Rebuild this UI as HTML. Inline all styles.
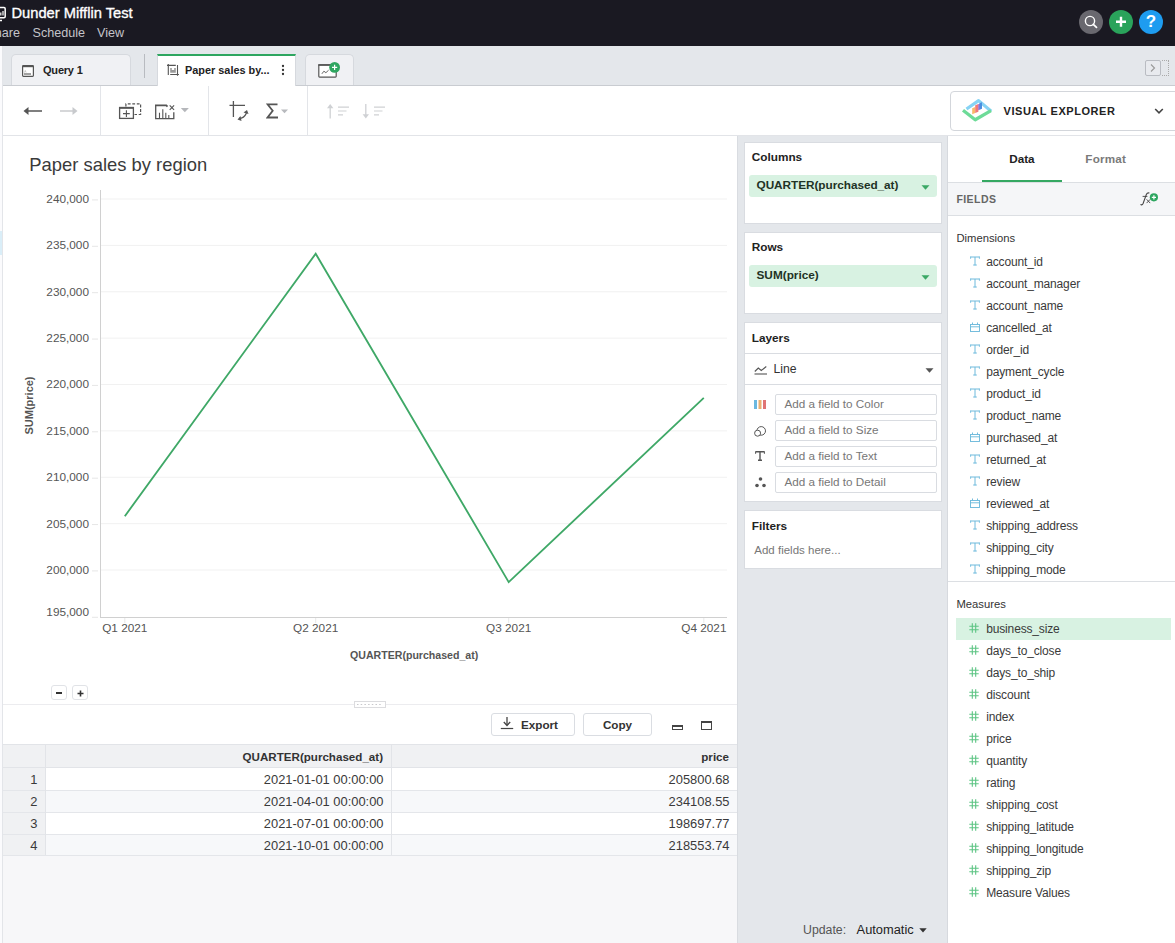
<!DOCTYPE html>
<html><head><meta charset="utf-8">
<style>
*{box-sizing:border-box;margin:0;padding:0}
html,body{width:1175px;height:943px;overflow:hidden;background:#fff;font-family:"Liberation Sans",sans-serif;color:#333}
.a{position:absolute}
.t{position:absolute;white-space:nowrap}
#top{left:0;top:0;width:1175px;height:46px;background:#1a1922}
#tabbar{left:0;top:46px;width:1175px;height:40px;background:#e4e7eb;border-bottom:1px solid #c9ccd1}
#toolbar{left:0;top:86px;width:1175px;height:50px;background:#fff;border-bottom:1px solid #e2e4e8}
.sep{position:absolute;width:1px;background:#e3e5e9}
</style></head>
<body>
<!-- left strip -->


<!-- TOP BAR -->
<div id="top" class="a">
  <svg class="a" style="left:0;top:6px" width="8" height="16" viewBox="0 0 8 16"><rect x="-4" y="1.5" width="9.2" height="10.2" rx="1.2" fill="none" stroke="#fff" stroke-width="1.5"/><path d="M0.8 6.5v3M3 5v4.5" stroke="#fff" stroke-width="1.2"/><path d="M-1 14.5h3" stroke="#fff" stroke-width="1.3"/></svg>
  <div class="t" style="left:11.5px;top:6.4px;font-size:14.7px;line-height:14.7px;color:#fff;-webkit-text-stroke:0.35px #fff">Dunder Mifflin Test</div>
  <div class="t" style="left:-13.6px;top:26.6px;font-size:12.6px;line-height:12.6px;color:#c4c4c9">Share</div>
  <div class="t" style="left:32.5px;top:26.6px;font-size:12.6px;line-height:12.6px;color:#c4c4c9">Schedule</div>
  <div class="t" style="left:97px;top:26.6px;font-size:12.6px;line-height:12.6px;color:#c4c4c9">View</div>
  <div class="a" style="left:1079px;top:10px;width:24px;height:24px;border-radius:50%;background:#69686f"></div>
  <svg class="a" style="left:1079px;top:10px" width="24" height="24" viewBox="0 0 24 24"><circle cx="11" cy="11" r="4.6" fill="none" stroke="#fff" stroke-width="1.4"/><path d="M14.3 14.3l3.2 3" stroke="#fff" stroke-width="1.8" stroke-linecap="round"/></svg>
  <div class="a" style="left:1109px;top:10px;width:24px;height:24px;border-radius:50%;background:#2aa35b"></div>
  <svg class="a" style="left:1109px;top:10px" width="24" height="24" viewBox="0 0 24 24"><path d="M12 6.8v10M7 11.8h10" stroke="#fff" stroke-width="2.4"/></svg>
  <div class="a" style="left:1139px;top:10px;width:24px;height:24px;border-radius:50%;background:#1e9cf0"></div>
  <div class="t" style="left:1139px;top:4px;width:24px;text-align:center;font-size:17px;line-height:24px;font-weight:bold;color:#fff;top:10px">?</div>
</div>

<!-- TAB BAR -->
<div id="tabbar" class="a"></div>
<div class="a" style="left:11px;top:54px;width:120px;height:31px;background:#f0f1f4;border:1px solid #d6d9de;border-bottom:none;border-radius:5px 5px 0 0"></div>
<svg class="a" style="left:22px;top:65px" width="12" height="12" viewBox="0 0 12 12"><rect x="0.6" y="0.6" width="10.8" height="10.8" rx="0.8" fill="#fff" stroke="#555" stroke-width="1.2"/><rect x="0.6" y="0.6" width="10.8" height="1.6" fill="#555"/><path d="M2 9h7" stroke="#444" stroke-width="1"/><path d="M2.5 7.5l0.8-2 0.8 2" stroke="#aaa" stroke-width="0.6" fill="none"/></svg>
<div class="t" style="left:43px;top:64.7px;font-size:11px;line-height:11px;font-weight:bold;color:#222;letter-spacing:-0.2px">Query 1</div>
<div class="a" style="left:143.5px;top:54px;width:1px;height:24px;background:#b8bbc0"></div>
<div class="a" style="left:157px;top:54px;width:139px;height:32px;background:#fff;border-top:2px solid #2ea660;border-left:1px solid #d6d9de;border-right:1px solid #d6d9de"></div>
<svg class="a" style="left:167px;top:63px" width="13" height="14" viewBox="0 0 13 14"><path d="M0 2.35H8.8M1.3 1V11.9M10.5 2V12.7M3.2 11.5H11.9" stroke="#555" stroke-width="1.1" fill="none"/><path d="M3.2 9.7V4.9h1.6v2h2.4v-2h1.6v4.8z" fill="#9a9a9a"/></svg>
<div class="t" style="left:185px;top:64.7px;font-size:10.9px;line-height:10.9px;font-weight:bold;color:#222">Paper sales by...</div>
<svg class="a" style="left:281px;top:63px" width="4" height="13" viewBox="0 0 4 13"><circle cx="2" cy="3" r="1.15" fill="#333"/><circle cx="2" cy="7" r="1.15" fill="#333"/><circle cx="2" cy="11" r="1.15" fill="#333"/></svg>
<div class="a" style="left:304.5px;top:54px;width:49px;height:31px;background:#f0f1f4;border:1px solid #d6d9de;border-bottom:none;border-radius:5px 5px 0 0"></div>
<svg class="a" style="left:317px;top:61px" width="24" height="18" viewBox="0 0 24 18"><rect x="1.8" y="3.8" width="17.4" height="12.3" rx="0.8" fill="#fff" stroke="#555" stroke-width="1.2"/><rect x="1.2" y="3.2" width="14" height="1.6" fill="#555"/><path d="M4.9 12.8L6.9 10.2 8.9 11.7 11.6 9.2" stroke="#555" stroke-width="0.9" fill="none"/><circle cx="17.6" cy="6.4" r="5.4" fill="#2ea660"/><path d="M17.6 3.8v5.2M15 6.4h5.2" stroke="#fff" stroke-width="1.2"/></svg>
<div class="a" style="left:1144.5px;top:60px;width:16px;height:16px;border:1px solid #b9bcc2;border-radius:2px;background:#e8eaee"></div>
<svg class="a" style="left:1145px;top:60px" width="16" height="16" viewBox="0 0 16 16"><path d="M6 4.5l3.5 3.5L6 11.5" stroke="#999" stroke-width="1.1" fill="none"/></svg>
<div class="a" style="left:1162px;top:60px;width:7px;height:16px;border:1px dotted #aaa;border-left:none"></div>

<!-- TOOLBAR -->
<div id="toolbar" class="a"></div>
<div class="sep" style="left:100px;top:86px;height:49px"></div>
<div class="sep" style="left:208px;top:86px;height:49px"></div>
<div class="sep" style="left:307px;top:86px;height:49px"></div>

<!-- toolbar icons -->
<svg class="a" style="left:23px;top:105px" width="20" height="12" viewBox="0 0 20 12"><path d="M2 6h17" stroke="#555" stroke-width="1.5"/><path d="M0.5 6L5.5 2v8z" fill="#555"/></svg>
<svg class="a" style="left:59px;top:105px" width="20" height="12" viewBox="0 0 20 12"><path d="M1 6h16" stroke="#c8cacd" stroke-width="1.5"/><path d="M18.5 6L13.5 2v8z" fill="#c8cacd"/></svg>
<svg class="a" style="left:118px;top:102px" width="25" height="18" viewBox="0 0 25 18"><path d="M7.9 4.5V1.9H22.6V12.5H16.5" stroke="#555" stroke-width="1.2" stroke-dasharray="2.8 1.7" fill="none"/><rect x="1.6" y="5.6" width="13.8" height="10.8" fill="#fff" stroke="#555" stroke-width="1.3"/><rect x="1" y="4.9" width="15" height="1.9" fill="#555"/><path d="M8.4 8.3v6.6M5 11.6h6.8" stroke="#555" stroke-width="1.1"/></svg>
<svg class="a" style="left:155px;top:103px" width="36" height="17" viewBox="0 0 36 17"><path d="M0.7 2.2V15.6H18.8V9.2" stroke="#555" stroke-width="1.3" fill="none"/><path d="M0 2.3H11.3L12.5 3.6" stroke="#555" stroke-width="1.7" fill="none"/><path d="M4.5 15V9.8M7.8 15V6.2M10.8 15V9.8M13.8 15V12" stroke="#555" stroke-width="1.1"/><path d="M14.7 2.4l4.4 4.4M19.1 2.4l-4.4 4.4" stroke="#555" stroke-width="1.1"/><path d="M25.8 5h8.1l-4.05 4.2z" fill="#b5b7bb"/></svg>
<svg class="a" style="left:229px;top:101px" width="22" height="21" viewBox="0 0 22 21"><path d="M0.5 4.3h15.5M4.4 0v16" stroke="#555" stroke-width="1.3"/><path d="M10 17.5q5 0 7.5-5.5" stroke="#555" stroke-width="1.3" fill="none"/><path d="M14.5 11.5l3.5-2.5 1.5 4z" fill="#555"/><path d="M11.5 15l-3 3.5 4 1.5z" fill="#555"/></svg>
<svg class="a" style="left:266px;top:103px" width="24" height="16" viewBox="0 0 24 16"><path d="M11.5 1.3H1.5l5.2 6.5L1.5 14.5h10.5" stroke="#555" stroke-width="1.8" fill="none"/><path d="M15 6.5h7l-3.5 3.7z" fill="#b8babe"/></svg>
<svg class="a" style="left:326px;top:103px" width="24" height="17" viewBox="0 0 24 17"><path d="M4.2 3v12.5" stroke="#cfd1d4" stroke-width="1.3"/><path d="M4.2 1L1 5.3h6.4z" fill="#cfd1d4"/><path d="M12 4.2h11M12 8h8.5M12 11.9h5" stroke="#cfd1d4" stroke-width="1.2"/></svg>
<svg class="a" style="left:362px;top:103px" width="24" height="17" viewBox="0 0 24 17"><path d="M3.8 1v12.5" stroke="#cfd1d4" stroke-width="1.3"/><path d="M3.8 15.5L0.6 11.2h6.4z" fill="#cfd1d4"/><path d="M12 4.2h11M12 8h8.5M12 11.9h5" stroke="#cfd1d4" stroke-width="1.2"/></svg>
<!-- visual explorer -->
<div class="a" style="left:949.8px;top:91px;width:240px;height:40px;border:1px solid #d3d6db;border-radius:4px;background:#fff"></div>
<svg class="a" style="left:955px;top:92px" width="45" height="38" viewBox="0 0 45 38"><path d="M11.5 17L23.6 8.6L36.2 19.2" stroke="#86d3f4" stroke-width="3.2" fill="none" stroke-linejoin="round"/><path d="M17.2 16.2l3-1.2v6l-3 1.2z" fill="#f8b86a"/><path d="M20.2 13.2l3.2-1.3v7.8l-3.2 1.3z" fill="#f07a78"/><path d="M23.2 12.2l1.8-0.7v6l-1.8 0.7z" fill="#9d6fd0"/><path d="M24.6 11.3l2.4-1v6.4l-2.4 1z" fill="#4a8fe0"/><path d="M8 18.3L20.2 27.8L36 18.6" stroke="#6ddb98" stroke-width="3.3" fill="none" stroke-linejoin="round"/></svg>
<div class="t" style="left:1003.5px;top:105.8px;font-size:11px;line-height:11px;font-weight:bold;color:#222;letter-spacing:0.55px">VISUAL EXPLORER</div>
<svg class="a" style="left:1154px;top:107px" width="10" height="8" viewBox="0 0 10 8"><path d="M1.2 2l3.8 3.8L8.8 2" stroke="#444" stroke-width="1.6" fill="none"/></svg>
<!--MAIN-->
<div class="a" style="left:3px;top:136px;width:735px;height:807px;background:#fff;border-right:1px solid #d9dce1"></div>
<div class="t" style="left:29.3px;top:156.2px;font-size:18.4px;line-height:18.4px;color:#3a3a3a">Paper sales by region</div>
<svg class="a" style="left:0;top:0" width="740" height="720" viewBox="0 0 740 720"><path d="M101 199.02H727" stroke="#f1f1f1" stroke-width="1"/><path d="M92 199.92H98" stroke="#e6e6e6" stroke-width="1"/><path d="M101 245.40H727" stroke="#f1f1f1" stroke-width="1"/><path d="M92 246.30H98" stroke="#e6e6e6" stroke-width="1"/><path d="M101 291.77H727" stroke="#f1f1f1" stroke-width="1"/><path d="M92 292.67H98" stroke="#e6e6e6" stroke-width="1"/><path d="M101 338.15H727" stroke="#f1f1f1" stroke-width="1"/><path d="M92 339.05H98" stroke="#e6e6e6" stroke-width="1"/><path d="M101 384.52H727" stroke="#f1f1f1" stroke-width="1"/><path d="M92 385.42H98" stroke="#e6e6e6" stroke-width="1"/><path d="M101 430.90H727" stroke="#f1f1f1" stroke-width="1"/><path d="M92 431.80H98" stroke="#e6e6e6" stroke-width="1"/><path d="M101 477.27H727" stroke="#f1f1f1" stroke-width="1"/><path d="M92 478.17H98" stroke="#e6e6e6" stroke-width="1"/><path d="M101 523.65H727" stroke="#f1f1f1" stroke-width="1"/><path d="M92 524.55H98" stroke="#e6e6e6" stroke-width="1"/><path d="M101 570.02H727" stroke="#f1f1f1" stroke-width="1"/><path d="M92 570.92H98" stroke="#e6e6e6" stroke-width="1"/><path d="M92 617.30H98" stroke="#e6e6e6" stroke-width="1"/><path d="M100.5 190V617" stroke="#d0d0d0" stroke-width="1"/><path d="M100 617.5H727" stroke="#d0d0d0" stroke-width="1"/><path d="M124.8 618V623" stroke="#e8e8e8" stroke-width="1"/><path d="M315.7 618V623" stroke="#e8e8e8" stroke-width="1"/><path d="M508.7 618V623" stroke="#e8e8e8" stroke-width="1"/><path d="M703.8 618V623" stroke="#e8e8e8" stroke-width="1"/><polyline points="124.8,516.2 315.7,253.7 508.7,582.1 703.8,397.9" fill="none" stroke="#3fa867" stroke-width="1.85" stroke-linejoin="miter"/></svg>
<div class="t" style="left:0;width:89px;text-align:right;top:193.8px;font-size:11.8px;line-height:11.8px;color:#555">240,000</div>
<div class="t" style="left:0;width:89px;text-align:right;top:240.2px;font-size:11.8px;line-height:11.8px;color:#555">235,000</div>
<div class="t" style="left:0;width:89px;text-align:right;top:286.6px;font-size:11.8px;line-height:11.8px;color:#555">230,000</div>
<div class="t" style="left:0;width:89px;text-align:right;top:333.0px;font-size:11.8px;line-height:11.8px;color:#555">225,000</div>
<div class="t" style="left:0;width:89px;text-align:right;top:379.3px;font-size:11.8px;line-height:11.8px;color:#555">220,000</div>
<div class="t" style="left:0;width:89px;text-align:right;top:425.7px;font-size:11.8px;line-height:11.8px;color:#555">215,000</div>
<div class="t" style="left:0;width:89px;text-align:right;top:472.1px;font-size:11.8px;line-height:11.8px;color:#555">210,000</div>
<div class="t" style="left:0;width:89px;text-align:right;top:518.5px;font-size:11.8px;line-height:11.8px;color:#555">205,000</div>
<div class="t" style="left:0;width:89px;text-align:right;top:564.8px;font-size:11.8px;line-height:11.8px;color:#555">200,000</div>
<div class="t" style="left:0;width:89px;text-align:right;top:607.2px;font-size:11.8px;line-height:11.8px;color:#555">195,000</div>
<div class="t" style="left:74.8px;width:100px;text-align:center;top:622.9px;font-size:11.8px;line-height:11.8px;color:#555">Q1 2021</div>
<div class="t" style="left:265.7px;width:100px;text-align:center;top:622.9px;font-size:11.8px;line-height:11.8px;color:#555">Q2 2021</div>
<div class="t" style="left:458.7px;width:100px;text-align:center;top:622.9px;font-size:11.8px;line-height:11.8px;color:#555">Q3 2021</div>
<div class="t" style="left:627px;width:99.5px;text-align:right;top:622.9px;font-size:11.8px;line-height:11.8px;color:#555">Q4 2021</div>
<div class="t" style="left:350px;top:650px;font-size:10.6px;line-height:10.6px;font-weight:bold;color:#555">QUARTER(purchased_at)</div>
<div class="t" style="left:-6px;top:399.5px;width:70px;text-align:center;transform:rotate(-90deg);font-size:11px;line-height:11px;font-weight:bold;color:#555">SUM(price)</div>
<div class="a" style="left:51px;top:684.8px;width:15.5px;height:15.7px;border:1px solid #e1e3e7;border-radius:3px;background:#fff"></div>
<div class="a" style="left:55.8px;top:692px;width:6px;height:2px;background:#333"></div>
<div class="a" style="left:72px;top:684.8px;width:15.5px;height:15.7px;border:1px solid #e1e3e7;border-radius:3px;background:#fff"></div>
<svg class="a" style="left:76.6px;top:689.6px" width="7" height="7" viewBox="0 0 7 7"><path d="M3.5 0.5v6M0.5 3.5h6" stroke="#333" stroke-width="1.6"/></svg>
<div class="a" style="left:3px;top:704px;width:734px;height:1px;background:#ececef"></div>
<div class="a" style="left:353.8px;top:701px;width:32px;height:6.5px;border:1px solid #dcdcdf;background:#fff"></div>
<svg class="a" style="left:354.3px;top:701.5px" width="31" height="5" viewBox="0 0 31 5"><path d="M3 2.5h25" stroke="#c8c8cc" stroke-width="1.2" stroke-dasharray="1.5 2.2"/></svg>
<div class="a" style="left:491px;top:712.5px;width:83.5px;height:23px;border:1px solid #dadde2;border-radius:3px;background:#fff"></div>
<svg class="a" style="left:500px;top:716px" width="14" height="14" viewBox="0 0 14 14"><path d="M7 1v8" stroke="#444" stroke-width="1.3"/><path d="M3.8 6L7 9.5 10.2 6" stroke="#444" stroke-width="1.3" fill="none"/><path d="M0.8 12.5h12.4" stroke="#444" stroke-width="1.2"/></svg>
<div class="t" style="left:521px;top:718.8px;font-size:11.7px;line-height:11.7px;font-weight:bold;color:#333">Export</div>
<div class="a" style="left:583px;top:712.5px;width:68.5px;height:23px;border:1px solid #dadde2;border-radius:3px;background:#fff"></div>
<div class="t" style="left:583.5px;width:68px;text-align:center;top:718.8px;font-size:11.7px;line-height:11.7px;font-weight:bold;color:#333">Copy</div>
<div class="a" style="left:672px;top:725px;width:10.5px;height:5px;border:1.5px solid #444;border-top-width:2px"></div>
<div class="a" style="left:701px;top:721px;width:11px;height:9px;border:1.3px solid #444;border-top-width:2.5px"></div>
<div class="a" style="left:3px;top:744px;width:734px;height:199px;background:#f7f7f9"></div>
<div class="a" style="left:3px;top:744px;width:734px;height:24px;background:#f0f1f3;border-top:1px solid #e2e4e8;border-bottom:1px solid #e2e4e8"></div>
<div class="a" style="left:46px;top:768px;width:691px;height:23px;background:#fff;border-bottom:1px solid #e4e6ea"></div>
<div class="a" style="left:3px;top:768px;width:43px;height:23px;background:#f0f1f3;border-bottom:1px solid #e4e6ea"></div>
<div class="a" style="left:46px;top:791px;width:691px;height:22px;background:#f7f8fa;border-bottom:1px solid #e4e6ea"></div>
<div class="a" style="left:3px;top:791px;width:43px;height:22px;background:#f0f1f3;border-bottom:1px solid #e4e6ea"></div>
<div class="a" style="left:46px;top:813px;width:691px;height:22px;background:#fff;border-bottom:1px solid #e4e6ea"></div>
<div class="a" style="left:3px;top:813px;width:43px;height:22px;background:#f0f1f3;border-bottom:1px solid #e4e6ea"></div>
<div class="a" style="left:46px;top:835px;width:691px;height:21px;background:#f7f8fa;border-bottom:1px solid #e4e6ea"></div>
<div class="a" style="left:3px;top:835px;width:43px;height:21px;background:#f0f1f3;border-bottom:1px solid #e4e6ea"></div>
<div class="a" style="left:45px;top:744px;width:1px;height:111px;background:#e2e4e8"></div>
<div class="a" style="left:391px;top:744px;width:1px;height:111px;background:#e2e4e8"></div>
<div class="t" style="left:192px;width:191px;text-align:right;top:751.2px;font-size:11.6px;line-height:11.6px;font-weight:bold;color:#333">QUARTER(purchased_at)</div>
<div class="t" style="left:538px;width:191px;text-align:right;top:751.2px;font-size:11.6px;line-height:11.6px;font-weight:bold;color:#333">price</div>
<div class="t" style="left:3px;width:34.5px;text-align:right;top:773.7px;font-size:12.9px;line-height:12.9px;color:#3a3a3a">1</div>
<div class="t" style="left:192px;width:191.5px;text-align:right;top:773.7px;font-size:12.9px;line-height:12.9px;color:#3a3a3a">2021-01-01 00:00:00</div>
<div class="t" style="left:538px;width:191.5px;text-align:right;top:773.7px;font-size:12.9px;line-height:12.9px;color:#3a3a3a">205800.68</div>
<div class="t" style="left:3px;width:34.5px;text-align:right;top:795.7px;font-size:12.9px;line-height:12.9px;color:#3a3a3a">2</div>
<div class="t" style="left:192px;width:191.5px;text-align:right;top:795.7px;font-size:12.9px;line-height:12.9px;color:#3a3a3a">2021-04-01 00:00:00</div>
<div class="t" style="left:538px;width:191.5px;text-align:right;top:795.7px;font-size:12.9px;line-height:12.9px;color:#3a3a3a">234108.55</div>
<div class="t" style="left:3px;width:34.5px;text-align:right;top:817.7px;font-size:12.9px;line-height:12.9px;color:#3a3a3a">3</div>
<div class="t" style="left:192px;width:191.5px;text-align:right;top:817.7px;font-size:12.9px;line-height:12.9px;color:#3a3a3a">2021-07-01 00:00:00</div>
<div class="t" style="left:538px;width:191.5px;text-align:right;top:817.7px;font-size:12.9px;line-height:12.9px;color:#3a3a3a">198697.77</div>
<div class="t" style="left:3px;width:34.5px;text-align:right;top:839.7px;font-size:12.9px;line-height:12.9px;color:#3a3a3a">4</div>
<div class="t" style="left:192px;width:191.5px;text-align:right;top:839.7px;font-size:12.9px;line-height:12.9px;color:#3a3a3a">2021-10-01 00:00:00</div>
<div class="t" style="left:538px;width:191.5px;text-align:right;top:839.7px;font-size:12.9px;line-height:12.9px;color:#3a3a3a">218553.74</div>
<!--/MAIN-->
<!--SIDE-->
<div class="a" style="left:738px;top:136px;width:209px;height:807px;background:#e4e7eb"></div>
<div class="a" style="left:744px;top:142px;width:198px;height:82px;background:#fff;border:1px solid #d9dce1"></div>
<div class="a" style="left:744px;top:232px;width:198px;height:81.5px;background:#fff;border:1px solid #d9dce1"></div>
<div class="a" style="left:744px;top:322px;width:198px;height:179.5px;background:#fff;border:1px solid #d9dce1"></div>
<div class="a" style="left:744px;top:510.3px;width:198px;height:59.19999999999999px;background:#fff;border:1px solid #d9dce1"></div>
<div class="t" style="left:751.7px;top:152.2px;font-size:11.8px;line-height:11.8px;color:#222;font-weight:bold;">Columns</div>
<div class="a" style="left:749px;top:175px;width:188px;height:21.5px;background:#d8f2e2;border-radius:3px"></div>
<div class="t" style="left:756.5px;top:180.4px;font-size:11.8px;line-height:11.8px;color:#1f3326;font-weight:bold;letter-spacing:-0.05px">QUARTER(purchased_at)</div>
<svg class="a" style="left:921px;top:184.5px" width="9" height="5" viewBox="0 0 9 5"><path d="M0.5 0.3h8L4.5 4.7z" fill="#3aa865"/></svg>
<div class="t" style="left:751.7px;top:242.4px;font-size:11.8px;line-height:11.8px;color:#222;font-weight:bold;">Rows</div>
<div class="a" style="left:749px;top:265px;width:188px;height:21.5px;background:#d8f2e2;border-radius:3px"></div>
<div class="t" style="left:756.5px;top:270.4px;font-size:11.8px;line-height:11.8px;color:#1f3326;font-weight:bold;letter-spacing:0px">SUM(price)</div>
<svg class="a" style="left:921px;top:274.5px" width="9" height="5" viewBox="0 0 9 5"><path d="M0.5 0.3h8L4.5 4.7z" fill="#3aa865"/></svg>
<div class="t" style="left:751.7px;top:332.5px;font-size:11.8px;line-height:11.8px;color:#222;font-weight:bold;">Layers</div>
<div class="a" style="left:745px;top:353px;width:196px;height:1px;background:#d9dce1"></div>
<svg class="a" style="left:754px;top:365px" width="14" height="10" viewBox="0 0 14 10"><path d="M0.8 6.5l3.5-3.5 3 2.5 5-4" stroke="#555" stroke-width="1.1" fill="none"/><path d="M0.5 9h12.5" stroke="#555" stroke-width="1.1"/></svg>
<div class="t" style="left:773.6px;top:362.7px;font-size:12.2px;line-height:12.2px;color:#333;font-weight:normal;">Line</div>
<svg class="a" style="left:925px;top:367.5px" width="9" height="5" viewBox="0 0 9 5"><path d="M0.5 0.3h8L4.5 4.7z" fill="#555"/></svg>
<div class="a" style="left:745px;top:384px;width:196px;height:1px;background:#d9dce1"></div>
<div class="a" style="left:775px;top:393.5px;width:162px;height:21px;border:1px solid #d9dce1;border-radius:2px;background:#fff"></div>
<div class="t" style="left:784.4px;top:397.6px;font-size:11.7px;line-height:11.7px;color:#777;font-weight:normal;">Add a field to Color</div>
<div class="a" style="left:775px;top:419.5px;width:162px;height:21px;border:1px solid #d9dce1;border-radius:2px;background:#fff"></div>
<div class="t" style="left:784.4px;top:423.6px;font-size:11.7px;line-height:11.7px;color:#777;font-weight:normal;">Add a field to Size</div>
<div class="a" style="left:775px;top:445.5px;width:162px;height:21px;border:1px solid #d9dce1;border-radius:2px;background:#fff"></div>
<div class="t" style="left:784.4px;top:449.6px;font-size:11.7px;line-height:11.7px;color:#777;font-weight:normal;">Add a field to Text</div>
<div class="a" style="left:775px;top:471.5px;width:162px;height:21px;border:1px solid #d9dce1;border-radius:2px;background:#fff"></div>
<div class="t" style="left:784.4px;top:475.6px;font-size:11.7px;line-height:11.7px;color:#777;font-weight:normal;">Add a field to Detail</div>
<svg class="a" style="left:754px;top:399.5px" width="12" height="9" viewBox="0 0 12 9"><rect x="0" y="0" width="3" height="9" fill="#6bb8e0"/><rect x="4.5" y="0" width="3" height="9" fill="#eab072"/><rect x="9" y="0" width="3" height="9" fill="#e07474"/></svg>
<svg class="a" style="left:754px;top:425.5px" width="12" height="11" viewBox="0 0 12 11"><circle cx="7.2" cy="4.9" r="4.3" fill="none" stroke="#555" stroke-width="1"/><circle cx="3.6" cy="7.2" r="3" fill="#fff" stroke="#555" stroke-width="1"/></svg>
<svg class="a" style="left:755px;top:451px" width="10" height="10" viewBox="0 0 10 10"><path d="M0.5 0.8h9M5 0.8v8.5M3 9.3h4" stroke="#555" stroke-width="1.4"/><path d="M0.6 0.5v2.3M9.4 0.5v2.3" stroke="#555" stroke-width="1"/></svg>
<svg class="a" style="left:754.5px;top:476.5px" width="11" height="11" viewBox="0 0 11 11"><circle cx="5.5" cy="2" r="1.8" fill="#555"/><circle cx="2" cy="8.5" r="1.8" fill="#555"/><circle cx="9" cy="8.5" r="1.8" fill="#555"/></svg>
<div class="t" style="left:751.7px;top:520.6px;font-size:11.8px;line-height:11.8px;color:#222;font-weight:bold;">Filters</div>
<div class="t" style="left:754.3px;top:545.1px;font-size:11.5px;line-height:11.5px;color:#777;font-weight:normal;">Add fields here...</div>
<div class="t" style="left:803px;top:924.1px;font-size:12.3px;line-height:12.3px;color:#555;font-weight:normal;">Update:</div>
<div class="t" style="left:856.6px;top:923.6px;font-size:12.85px;line-height:12.85px;color:#222;font-weight:normal;">Automatic</div>
<svg class="a" style="left:918.5px;top:928px" width="8" height="5" viewBox="0 0 8 5"><path d="M0.3 0.3h7.4L4 4.5z" fill="#333"/></svg>
<div class="a" style="left:947px;top:136px;width:228px;height:807px;background:#fff;border-left:1px solid #d6d9de"></div>
<div class="a" style="left:948px;top:182px;width:227px;height:1px;background:#dcdfe3"></div>
<div class="a" style="left:982px;top:180px;width:80px;height:2px;background:#35a862"></div>
<div class="t" style="left:1009.2px;top:152.5px;font-size:11.7px;line-height:11.7px;color:#222;font-weight:bold;">Data</div>
<div class="t" style="left:1085.3px;top:152.5px;font-size:11.7px;line-height:11.7px;color:#7a7a7a;font-weight:bold;letter-spacing:0.2px">Format</div>
<div class="a" style="left:948px;top:183px;width:227px;height:32.5px;background:#f5f6f8;border-bottom:1px solid #dcdfe3"></div>
<div class="t" style="left:956.4px;top:194.2px;font-size:10.5px;line-height:10.5px;color:#666;font-weight:bold;letter-spacing:0.45px">FIELDS</div>
<svg class="a" style="left:1140px;top:192px" width="20" height="15" viewBox="0 0 20 15"><path d="M0.6 12.2Q1.6 13.8 3 11.8L6.3 2.6Q7.3 0.4 9.4 1" stroke="#444" stroke-width="1.1" fill="none"/><path d="M2.6 4.4h4.8" stroke="#444" stroke-width="0.9"/><path d="M6.6 7.3l3.6 3.8M10.2 7.3l-3.6 3.8" stroke="#444" stroke-width="0.9"/><circle cx="13.9" cy="5.3" r="4.1" fill="#2ea660"/><path d="M13.9 3.2v4.2M11.8 5.3h4.2" stroke="#fff" stroke-width="1.2"/></svg>
<div class="t" style="left:956.4px;top:232.8px;font-size:11.25px;line-height:11.25px;color:#333;font-weight:normal;">Dimensions</div>
<svg class="a" style="left:969.5px;top:255.9px" width="10" height="10" viewBox="0 0 10 10"><path d="M0.5 1h9M5 1v8.3M3.2 9h3.6" stroke="#6fbadc" stroke-width="1"/><path d="M0.6 0.5v2.3M9.4 0.5v2.3" stroke="#6fbadc" stroke-width="0.9"/></svg>
<div class="t" style="left:986.2px;top:255.7px;font-size:12px;line-height:12px;color:#3a3a3a;font-weight:normal;letter-spacing:-0.15px">account_id</div>
<svg class="a" style="left:969.5px;top:277.9px" width="10" height="10" viewBox="0 0 10 10"><path d="M0.5 1h9M5 1v8.3M3.2 9h3.6" stroke="#6fbadc" stroke-width="1"/><path d="M0.6 0.5v2.3M9.4 0.5v2.3" stroke="#6fbadc" stroke-width="0.9"/></svg>
<div class="t" style="left:986.2px;top:277.7px;font-size:12px;line-height:12px;color:#3a3a3a;font-weight:normal;letter-spacing:-0.15px">account_manager</div>
<svg class="a" style="left:969.5px;top:299.9px" width="10" height="10" viewBox="0 0 10 10"><path d="M0.5 1h9M5 1v8.3M3.2 9h3.6" stroke="#6fbadc" stroke-width="1"/><path d="M0.6 0.5v2.3M9.4 0.5v2.3" stroke="#6fbadc" stroke-width="0.9"/></svg>
<div class="t" style="left:986.2px;top:299.7px;font-size:12px;line-height:12px;color:#3a3a3a;font-weight:normal;letter-spacing:-0.15px">account_name</div>
<svg class="a" style="left:969.5px;top:321.9px" width="10" height="11" viewBox="0 0 10 11"><rect x="0.5" y="2.5" width="9" height="7" fill="none" stroke="#6fbadc" stroke-width="0.95"/><path d="M0.5 4.8h9M2.5 0.5v2.3M7.5 0.5v2.3" stroke="#6fbadc" stroke-width="0.95"/></svg>
<div class="t" style="left:986.2px;top:321.7px;font-size:12px;line-height:12px;color:#3a3a3a;font-weight:normal;letter-spacing:-0.15px">cancelled_at</div>
<svg class="a" style="left:969.5px;top:343.9px" width="10" height="10" viewBox="0 0 10 10"><path d="M0.5 1h9M5 1v8.3M3.2 9h3.6" stroke="#6fbadc" stroke-width="1"/><path d="M0.6 0.5v2.3M9.4 0.5v2.3" stroke="#6fbadc" stroke-width="0.9"/></svg>
<div class="t" style="left:986.2px;top:343.7px;font-size:12px;line-height:12px;color:#3a3a3a;font-weight:normal;letter-spacing:-0.15px">order_id</div>
<svg class="a" style="left:969.5px;top:365.9px" width="10" height="10" viewBox="0 0 10 10"><path d="M0.5 1h9M5 1v8.3M3.2 9h3.6" stroke="#6fbadc" stroke-width="1"/><path d="M0.6 0.5v2.3M9.4 0.5v2.3" stroke="#6fbadc" stroke-width="0.9"/></svg>
<div class="t" style="left:986.2px;top:365.7px;font-size:12px;line-height:12px;color:#3a3a3a;font-weight:normal;letter-spacing:-0.15px">payment_cycle</div>
<svg class="a" style="left:969.5px;top:387.9px" width="10" height="10" viewBox="0 0 10 10"><path d="M0.5 1h9M5 1v8.3M3.2 9h3.6" stroke="#6fbadc" stroke-width="1"/><path d="M0.6 0.5v2.3M9.4 0.5v2.3" stroke="#6fbadc" stroke-width="0.9"/></svg>
<div class="t" style="left:986.2px;top:387.7px;font-size:12px;line-height:12px;color:#3a3a3a;font-weight:normal;letter-spacing:-0.15px">product_id</div>
<svg class="a" style="left:969.5px;top:409.9px" width="10" height="10" viewBox="0 0 10 10"><path d="M0.5 1h9M5 1v8.3M3.2 9h3.6" stroke="#6fbadc" stroke-width="1"/><path d="M0.6 0.5v2.3M9.4 0.5v2.3" stroke="#6fbadc" stroke-width="0.9"/></svg>
<div class="t" style="left:986.2px;top:409.7px;font-size:12px;line-height:12px;color:#3a3a3a;font-weight:normal;letter-spacing:-0.15px">product_name</div>
<svg class="a" style="left:969.5px;top:431.9px" width="10" height="11" viewBox="0 0 10 11"><rect x="0.5" y="2.5" width="9" height="7" fill="none" stroke="#6fbadc" stroke-width="0.95"/><path d="M0.5 4.8h9M2.5 0.5v2.3M7.5 0.5v2.3" stroke="#6fbadc" stroke-width="0.95"/></svg>
<div class="t" style="left:986.2px;top:431.7px;font-size:12px;line-height:12px;color:#3a3a3a;font-weight:normal;letter-spacing:-0.15px">purchased_at</div>
<svg class="a" style="left:969.5px;top:453.9px" width="10" height="10" viewBox="0 0 10 10"><path d="M0.5 1h9M5 1v8.3M3.2 9h3.6" stroke="#6fbadc" stroke-width="1"/><path d="M0.6 0.5v2.3M9.4 0.5v2.3" stroke="#6fbadc" stroke-width="0.9"/></svg>
<div class="t" style="left:986.2px;top:453.7px;font-size:12px;line-height:12px;color:#3a3a3a;font-weight:normal;letter-spacing:-0.15px">returned_at</div>
<svg class="a" style="left:969.5px;top:475.9px" width="10" height="10" viewBox="0 0 10 10"><path d="M0.5 1h9M5 1v8.3M3.2 9h3.6" stroke="#6fbadc" stroke-width="1"/><path d="M0.6 0.5v2.3M9.4 0.5v2.3" stroke="#6fbadc" stroke-width="0.9"/></svg>
<div class="t" style="left:986.2px;top:475.7px;font-size:12px;line-height:12px;color:#3a3a3a;font-weight:normal;letter-spacing:-0.15px">review</div>
<svg class="a" style="left:969.5px;top:497.9px" width="10" height="11" viewBox="0 0 10 11"><rect x="0.5" y="2.5" width="9" height="7" fill="none" stroke="#6fbadc" stroke-width="0.95"/><path d="M0.5 4.8h9M2.5 0.5v2.3M7.5 0.5v2.3" stroke="#6fbadc" stroke-width="0.95"/></svg>
<div class="t" style="left:986.2px;top:497.7px;font-size:12px;line-height:12px;color:#3a3a3a;font-weight:normal;letter-spacing:-0.15px">reviewed_at</div>
<svg class="a" style="left:969.5px;top:519.9px" width="10" height="10" viewBox="0 0 10 10"><path d="M0.5 1h9M5 1v8.3M3.2 9h3.6" stroke="#6fbadc" stroke-width="1"/><path d="M0.6 0.5v2.3M9.4 0.5v2.3" stroke="#6fbadc" stroke-width="0.9"/></svg>
<div class="t" style="left:986.2px;top:519.7px;font-size:12px;line-height:12px;color:#3a3a3a;font-weight:normal;letter-spacing:-0.15px">shipping_address</div>
<svg class="a" style="left:969.5px;top:541.9px" width="10" height="10" viewBox="0 0 10 10"><path d="M0.5 1h9M5 1v8.3M3.2 9h3.6" stroke="#6fbadc" stroke-width="1"/><path d="M0.6 0.5v2.3M9.4 0.5v2.3" stroke="#6fbadc" stroke-width="0.9"/></svg>
<div class="t" style="left:986.2px;top:541.7px;font-size:12px;line-height:12px;color:#3a3a3a;font-weight:normal;letter-spacing:-0.15px">shipping_city</div>
<svg class="a" style="left:969.5px;top:563.9px" width="10" height="10" viewBox="0 0 10 10"><path d="M0.5 1h9M5 1v8.3M3.2 9h3.6" stroke="#6fbadc" stroke-width="1"/><path d="M0.6 0.5v2.3M9.4 0.5v2.3" stroke="#6fbadc" stroke-width="0.9"/></svg>
<div class="t" style="left:986.2px;top:563.7px;font-size:12px;line-height:12px;color:#3a3a3a;font-weight:normal;letter-spacing:-0.15px">shipping_mode</div>
<div class="a" style="left:948px;top:581px;width:227px;height:1px;background:#dcdfe3"></div>
<div class="t" style="left:956.4px;top:599.1px;font-size:11.25px;line-height:11.25px;color:#333;font-weight:normal;">Measures</div>
<div class="a" style="left:956px;top:618px;width:215px;height:21.6px;background:#d8f2e2"></div>
<svg class="a" style="left:969px;top:622.9px" width="10" height="10" viewBox="0 0 10 10"><path d="M3.3 0.3v9.4M6.7 0.3v9.4M0.3 3.3h9.4M0.3 6.7h9.4" stroke="#5cc483" stroke-width="1.1"/></svg>
<div class="t" style="left:986.2px;top:622.7px;font-size:12px;line-height:12px;color:#3a3a3a;font-weight:normal;letter-spacing:-0.15px">business_size</div>
<svg class="a" style="left:969px;top:644.9px" width="10" height="10" viewBox="0 0 10 10"><path d="M3.3 0.3v9.4M6.7 0.3v9.4M0.3 3.3h9.4M0.3 6.7h9.4" stroke="#5cc483" stroke-width="1.1"/></svg>
<div class="t" style="left:986.2px;top:644.7px;font-size:12px;line-height:12px;color:#3a3a3a;font-weight:normal;letter-spacing:-0.15px">days_to_close</div>
<svg class="a" style="left:969px;top:666.9px" width="10" height="10" viewBox="0 0 10 10"><path d="M3.3 0.3v9.4M6.7 0.3v9.4M0.3 3.3h9.4M0.3 6.7h9.4" stroke="#5cc483" stroke-width="1.1"/></svg>
<div class="t" style="left:986.2px;top:666.7px;font-size:12px;line-height:12px;color:#3a3a3a;font-weight:normal;letter-spacing:-0.15px">days_to_ship</div>
<svg class="a" style="left:969px;top:688.9px" width="10" height="10" viewBox="0 0 10 10"><path d="M3.3 0.3v9.4M6.7 0.3v9.4M0.3 3.3h9.4M0.3 6.7h9.4" stroke="#5cc483" stroke-width="1.1"/></svg>
<div class="t" style="left:986.2px;top:688.7px;font-size:12px;line-height:12px;color:#3a3a3a;font-weight:normal;letter-spacing:-0.15px">discount</div>
<svg class="a" style="left:969px;top:710.9px" width="10" height="10" viewBox="0 0 10 10"><path d="M3.3 0.3v9.4M6.7 0.3v9.4M0.3 3.3h9.4M0.3 6.7h9.4" stroke="#5cc483" stroke-width="1.1"/></svg>
<div class="t" style="left:986.2px;top:710.7px;font-size:12px;line-height:12px;color:#3a3a3a;font-weight:normal;letter-spacing:-0.15px">index</div>
<svg class="a" style="left:969px;top:732.9px" width="10" height="10" viewBox="0 0 10 10"><path d="M3.3 0.3v9.4M6.7 0.3v9.4M0.3 3.3h9.4M0.3 6.7h9.4" stroke="#5cc483" stroke-width="1.1"/></svg>
<div class="t" style="left:986.2px;top:732.7px;font-size:12px;line-height:12px;color:#3a3a3a;font-weight:normal;letter-spacing:-0.15px">price</div>
<svg class="a" style="left:969px;top:754.9px" width="10" height="10" viewBox="0 0 10 10"><path d="M3.3 0.3v9.4M6.7 0.3v9.4M0.3 3.3h9.4M0.3 6.7h9.4" stroke="#5cc483" stroke-width="1.1"/></svg>
<div class="t" style="left:986.2px;top:754.7px;font-size:12px;line-height:12px;color:#3a3a3a;font-weight:normal;letter-spacing:-0.15px">quantity</div>
<svg class="a" style="left:969px;top:776.9px" width="10" height="10" viewBox="0 0 10 10"><path d="M3.3 0.3v9.4M6.7 0.3v9.4M0.3 3.3h9.4M0.3 6.7h9.4" stroke="#5cc483" stroke-width="1.1"/></svg>
<div class="t" style="left:986.2px;top:776.7px;font-size:12px;line-height:12px;color:#3a3a3a;font-weight:normal;letter-spacing:-0.15px">rating</div>
<svg class="a" style="left:969px;top:798.9px" width="10" height="10" viewBox="0 0 10 10"><path d="M3.3 0.3v9.4M6.7 0.3v9.4M0.3 3.3h9.4M0.3 6.7h9.4" stroke="#5cc483" stroke-width="1.1"/></svg>
<div class="t" style="left:986.2px;top:798.7px;font-size:12px;line-height:12px;color:#3a3a3a;font-weight:normal;letter-spacing:-0.15px">shipping_cost</div>
<svg class="a" style="left:969px;top:820.9px" width="10" height="10" viewBox="0 0 10 10"><path d="M3.3 0.3v9.4M6.7 0.3v9.4M0.3 3.3h9.4M0.3 6.7h9.4" stroke="#5cc483" stroke-width="1.1"/></svg>
<div class="t" style="left:986.2px;top:820.7px;font-size:12px;line-height:12px;color:#3a3a3a;font-weight:normal;letter-spacing:-0.15px">shipping_latitude</div>
<svg class="a" style="left:969px;top:842.9px" width="10" height="10" viewBox="0 0 10 10"><path d="M3.3 0.3v9.4M6.7 0.3v9.4M0.3 3.3h9.4M0.3 6.7h9.4" stroke="#5cc483" stroke-width="1.1"/></svg>
<div class="t" style="left:986.2px;top:842.7px;font-size:12px;line-height:12px;color:#3a3a3a;font-weight:normal;letter-spacing:-0.15px">shipping_longitude</div>
<svg class="a" style="left:969px;top:864.9px" width="10" height="10" viewBox="0 0 10 10"><path d="M3.3 0.3v9.4M6.7 0.3v9.4M0.3 3.3h9.4M0.3 6.7h9.4" stroke="#5cc483" stroke-width="1.1"/></svg>
<div class="t" style="left:986.2px;top:864.7px;font-size:12px;line-height:12px;color:#3a3a3a;font-weight:normal;letter-spacing:-0.15px">shipping_zip</div>
<svg class="a" style="left:969px;top:886.9px" width="10" height="10" viewBox="0 0 10 10"><path d="M3.3 0.3v9.4M6.7 0.3v9.4M0.3 3.3h9.4M0.3 6.7h9.4" stroke="#5cc483" stroke-width="1.1"/></svg>
<div class="t" style="left:986.2px;top:886.7px;font-size:12px;line-height:12px;color:#3a3a3a;font-weight:normal;letter-spacing:-0.15px">Measure Values</div>
<!--/SIDE-->
<!--STRIP--><div class="a" style="left:0;top:231px;width:2px;height:23.5px;background:#daeef8;z-index:6"></div><div class="a" style="left:0;top:46px;width:3px;height:897px;background:#fbfbfd;border-right:1px solid #e3e5e9;z-index:5"></div>
</body></html>
